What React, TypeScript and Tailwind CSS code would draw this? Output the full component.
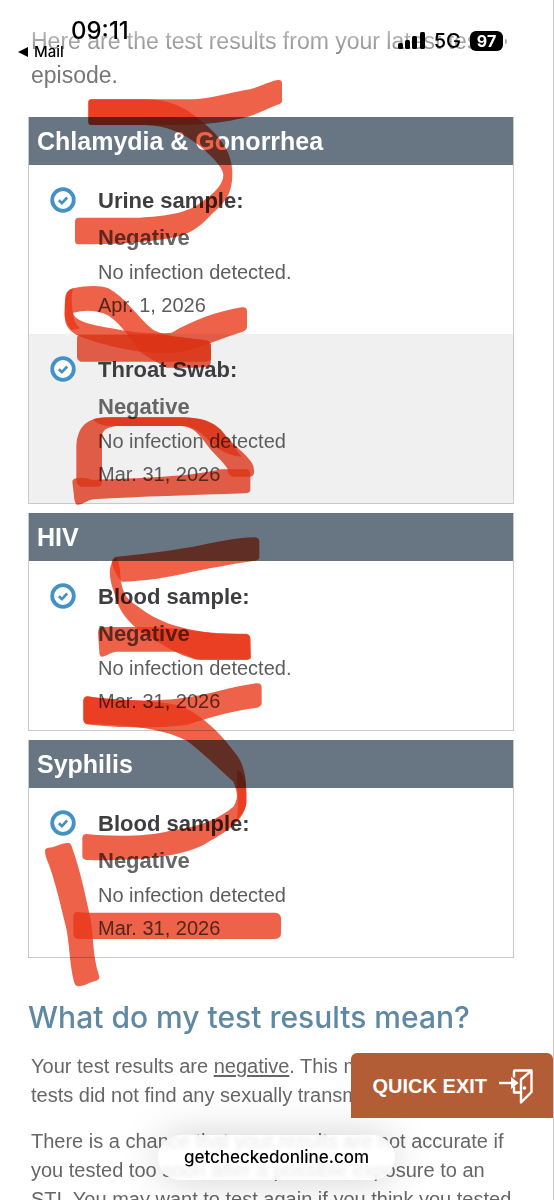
import { ReactNode } from "react";

interface Sample {
  name: string;
  result: string;
  detail: string;
  date: string;
}

interface TestGroup {
  title: string;
  samples: Sample[];
}

const groups: TestGroup[] = [
  {
    title: "Chlamydia & Gonorrhea",
    samples: [
      { name: "Urine sample:", result: "Negative", detail: "No infection detected.", date: "Apr. 1, 2026" },
      { name: "Throat Swab:", result: "Negative", detail: "No infection detected", date: "Mar. 31, 2026" },
    ],
  },
  {
    title: "HIV",
    samples: [{ name: "Blood sample:", result: "Negative", detail: "No infection detected.", date: "Mar. 31, 2026" }],
  },
  {
    title: "Syphilis",
    samples: [{ name: "Blood sample:", result: "Negative", detail: "No infection detected", date: "Mar. 31, 2026" }],
  },
];

function CheckIcon() {
  return (
    <svg viewBox="0 0 26 26" className="h-[26px] w-[26px]" fill="none" stroke="#4492c4">
      <circle cx="13" cy="13" r="10.8" strokeWidth="3.8" fill="#fff" />
      <path d="M8.8 13.2l3.1 2.9 5.3-5.6" strokeWidth="2.7" />
    </svg>
  );
}

function ExitIcon() {
  return (
    <svg viewBox="0 0 34 36" className="h-9 w-[34px]" fill="none" stroke="#fff" strokeWidth="2.4" strokeLinejoin="round">
      <path d="M0 15h13" />
      <path d="M12 9l7.5 6-7.5 6z" fill="#fff" stroke="none" />
      <path d="M15 9.5V3.5q0-1 1-1H32.5V24L22 34.5V11.5L32 3M15 18.5v6h6.5" />
      <circle cx="25.5" cy="20" r="1.8" fill="#fff" stroke="none" />
    </svg>
  );
}

function ResultCard({ group }: { group: TestGroup }) {
  return (
    <section className="border border-t-0 border-[#c9c9c9]">
      <h2 className="bg-[#687683] px-2 text-[25px] leading-[48px] font-bold text-white">{group.title}</h2>
      {group.samples.map((s) => (
        <div key={s.name} className="flex gap-[22px] pt-[18px] pr-4 pb-3 pl-[21px] even:bg-white odd:bg-[#f0f0f0]">
          <div className="shrink-0 pt-1">
            <CheckIcon />
          </div>
          <div className="text-xl leading-[33px] text-[#5c5c5c]">
            <h3 className="text-[22px] leading-9 font-bold text-[#3e3e40]">{s.name}</h3>
            <p className="text-[22px] leading-[37px] font-bold text-[#666]">{s.result}</p>
            <p>{s.detail}</p>
            <p>{s.date}</p>
          </div>
        </div>
      ))}
    </section>
  );
}

function StatusBar() {
  return (
    <header className="absolute inset-x-0 top-0 h-[62px] bg-gradient-to-b from-white/60 via-white/50 to-white/0 font-['Inter',sans-serif] text-black">
      <div className="absolute top-[17px] left-[71px] text-2xl leading-7 font-medium">09:11</div>
      <a href="#mail" className="absolute top-[42px] left-[18px] flex items-center gap-[6px] text-[15px] leading-5 font-medium">
        <svg viewBox="0 0 10 10" className="h-[10px] w-[10px]">
          <path d="M0 5L10 0v10z" />
        </svg>
        Mail
      </a>
      <div className="absolute top-[31px] right-[46px] flex h-5 items-center">
        <svg viewBox="0 0 28 18" className="mr-2 h-[18px] w-7">
          <rect x="0" y="11" width="5" height="6" rx="1.5" />
          <rect x="7" y="8" width="5" height="9" rx="1.5" />
          <rect x="14" y="4" width="5" height="13" rx="1.5" />
          <rect x="22" y="0" width="5" height="17" rx="1.5" />
        </svg>
        <span className="mr-[9px] text-xl font-medium">5G</span>
        <span className="w-[33px] rounded-md bg-black text-center text-base leading-5 font-bold text-white">97</span>
        <span className="ml-[2px] h-[5px] w-[2px] rounded-r bg-[#aaa]" />
      </div>
    </header>
  );
}

function Letter({ x, y, children }: { x: number; y: number; children: ReactNode }) {
  return <g transform={`translate(${x} ${y})`}>{children}</g>;
}

// red marker drawn over the results, at three units per pixel
function Marker() {
  return (
    <svg
      viewBox="0 0 1662 3600"
      className="pointer-events-none absolute top-0 left-0 h-[1200px] w-[554px] mix-blend-multiply blur-[0.5px]"
      fill="#e93617"
      fillOpacity="0.78"
      aria-hidden="true"
    >
      <Letter x={60} y={210}>
        <path d="M214 88H380C450 88 500 115 540 150C605 200 637 250 637 310C637 380 610 400 570 438C535 475 510 490 470 500C390 517 300 522 175 523Q165 523 165 512V455Q165 443 177 443H360C430 440 500 430 540 400C590 365 610 340 610 315C610 290 570 255 540 228C490 190 440 165 370 165H214Q205 165 205 156V98Q205 88 214 88Z" />
        <path d="M214 88H520C580 85 630 68 690 58C725 48 745 36 772 30Q786 28 786 40V92Q786 101 772 104C735 118 700 140 650 148C600 160 540 165 470 165H214Q205 165 205 156V98Q205 88 214 88Z" />
      </Letter>
      <Letter x={60} y={780}>
        <path d="M160 85C200 76 240 75 265 85C315 110 350 170 400 210C450 235 520 235 565 242Q576 250 572 310C570 325 540 324 440 323C400 300 380 290 360 275C320 220 290 175 250 160C210 148 190 152 160 158C158 170 162 188 180 205L155 210C138 190 132 170 135 150C136 100 142 90 160 85Z" />
        <path d="M160 85C150 110 158 140 158 158C165 185 220 195 270 204C330 216 400 225 455 218C520 180 590 155 665 142Q680 140 681 152V200Q681 210 668 215C600 235 540 265 480 276C400 290 250 260 170 225C130 200 132 180 135 120C136 100 142 90 160 85Z" />
        <path d="M182 224H330C400 224 500 230 560 242Q573 246 573 255V295Q573 305 555 305H182Q171 300 171 290V235Q171 224 182 224Z" />
        <path d="M255 472H480C560 472 590 490 620 530C650 565 690 590 700 618Q708 650 690 650H640Q622 648 622 625C610 605 585 585 565 560C530 510 510 498 480 498H290C260 502 247 510 246 530V665Q246 680 230 680H185Q170 678 169 660V560C172 500 200 475 255 472Z" />
        <path d="M168 655C185 650 200 655 220 660C350 655 520 650 600 628H680Q691 630 691 645V690Q690 700 675 700C520 705 360 710 220 718C200 720 190 736 170 734Q163 730 161 700L157 665Q158 657 168 655Z" />
        <path d="M220 478C240 472 280 472 320 472H480C530 472 570 482 600 508C620 530 640 560 665 590C640 590 600 575 575 550C535 505 510 498 480 498H290C260 500 230 495 220 478Z" />
      </Letter>
      <Letter x={60} y={1515}>
        <path d="M290 155C350 150 440 138 520 125C590 112 640 98 705 97Q718 98 718 110V158Q716 166 700 168C630 178 570 190 510 202C440 218 370 230 305 230C290 215 280 190 275 172Q278 157 290 155Z" />
        <path d="M290 158C302 180 300 215 304 235C310 268 325 288 355 305C410 350 480 370 550 380C610 386 640 386 680 388Q691 390 691 402V453Q691 464 680 464H530C470 450 430 420 370 385C310 340 295 310 282 260C267 220 262 175 290 158Z" />
        <path d="M248 366H390C450 366 520 378 590 386H680Q691 390 691 402L693 460Q690 464 680 464H540C510 460 490 440 460 440H290C265 444 260 454 245 455Q238 454 238 440L234 382Q235 366 248 366Z" />
        <path d="M203 574C280 588 420 590 480 580C570 570 630 545 710 535Q725 534 725 548V595Q725 604 712 608C620 620 560 640 500 660C400 672 280 668 200 658Q190 655 190 642V586Q192 574 203 574Z" />
      </Letter>
      <Letter x={60} y={2190}>
        {/* loop starts in the card above and runs down over this one */}
        <path d="M203 -101C300 -85 410 -92 480 -72C550 -45 610 20 650 75C675 110 681 150 679 220C670 280 610 310 550 345C470 385 330 393 200 390Q187 388 187 378V325Q187 312 200 312C270 320 390 320 450 302C540 290 600 265 640 230C657 205 652 185 640 155C590 110 550 70 505 35C450 5 370 -15 200 -18Q190 -22 190 -33V-89Q192 -101 203 -101Z" />
        <path d="M652 120C675 130 681 160 679 220C674 245 662 260 650 268C655 240 655 200 650 165Z" />
        <path d="M85 353C105 352 120 340 145 338Q154 340 157 355C180 420 195 490 210 560C222 610 215 670 238 740Q238 750 225 753C205 758 195 768 175 769Q165 768 162 755C150 710 150 660 140 600C125 540 105 450 85 400Q74 375 75 360Q77 354 85 353Z" />
        <path d="M172 545C185 548 200 548 220 548H765Q783 550 783 565V610Q783 626 765 627H175Q160 625 160 612V558Q162 545 172 545Z" />
      </Letter>
    </svg>
  );
}

export default function App() {
  return (
    <div className="relative h-screen overflow-hidden border-r border-[#c8c8c8] bg-white font-['Liberation_Sans',Arial,sans-serif]">
      <main className="pr-[39px] pl-7">
        <p className="pt-6 pl-[3px] text-[23px] leading-[34px] text-[#777]">
          Here are the test results from your latest test episode.
        </p>
        <div className="mt-[25px] flex flex-col gap-[9px]">
          {groups.map((g) => (
            <ResultCard key={g.title} group={g} />
          ))}
        </div>
        <h1 className="mt-[39px] -mr-6 font-['Inter',sans-serif] text-[30px] leading-10 font-medium text-[#5f88a5]">
          What do my test results mean?
        </h1>
        <div className="mt-[15px] flex flex-col gap-[17px] pl-[3px] text-xl leading-[29px] text-[#666]">
          <p>
            Your test results are <span className="underline underline-offset-2">negative</span>. This means that your
            tests did not find any sexually transmitted infections.
          </p>
          <p>
            There is a chance that your results are not accurate if you tested too soon after a possible exposure to an
            STI. You may want to test again if you think you tested too soon.
          </p>
        </div>
      </main>

      <Marker />
      <StatusBar />

      <div className="absolute inset-x-0 bottom-5 flex justify-center">
        <a
          href="#address"
          className="rounded-3xl bg-white/85 px-[26px] font-['Inter',sans-serif] text-[17px] leading-[45px] font-medium text-black shadow-[0_0_40px_rgba(0,0,0,0.18)] backdrop-blur-[2px]"
        >
          getcheckedonline.com
        </a>
      </div>
      <button
        type="button"
        className="absolute right-0 bottom-[82px] flex h-[65px] items-center gap-3 rounded-t-md bg-[#b25d35] pr-5 pl-[22px] text-xl font-bold text-white"
      >
        QUICK EXIT
        <ExitIcon />
      </button>
    </div>
  );
}
